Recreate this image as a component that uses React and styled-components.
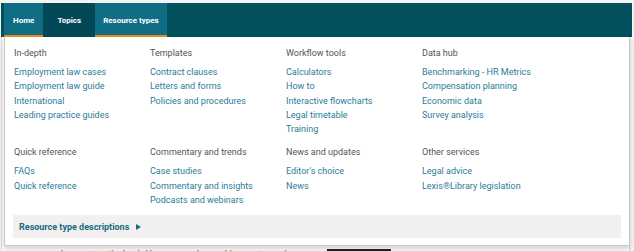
import styled, { createGlobalStyle } from 'styled-components'

const GlobalStyle = createGlobalStyle`
    html, body {
        margin: 0;
        padding: 0;
    }
    body {
        font-family: Roboto, "Liberation Sans", sans-serif;
        background: #f4f4f4;
    }
    * {
        box-sizing: border-box;
    }
`

const Page = styled.div`
    position: relative;
    width: 634px;
    height: 251px;
    padding-top: 3px;
    overflow: hidden;
    background: #f4f4f4;
`

const NavBar = styled.nav`
    display: flex;
    height: 34px;
    margin: 0 2px 0 1px;
    padding-left: 3px;
    background: #03505d;
`

const Tab = styled.a`
    display: flex;
    align-items: center;
    padding: 0 ${props => props.$pad || 9}px;
    font-size: 8px;
    font-weight: 700;
    color: #ffffff;
    background: ${props => props.$active ? '#0f6d84' : '#034856'};
    box-shadow: ${props => props.$active ? 'inset 0 -2px 0 #f08b1f' : 'none'};
`

const PageBody = styled.div`
    display: flex;
    align-items: flex-end;
    gap: 24px;
    height: 214px;
    margin: 0 4px 0 1px;
    padding-left: 41px;
    background: #ffffff;
    border-left: 1px solid #d8d8d8;
    border-right: 1px solid #d8d8d8;
`

const BodyText = styled.p`
    margin: 0 0 -9px;
    font-size: 9px;
    line-height: 12px;
    color: #333;
    white-space: nowrap;
`

const Figure = styled.div`
    width: 64px;
    height: 20px;
    margin-bottom: -18px;
    background: #222;
`

const Dropdown = styled.div`
    position: absolute;
    top: 37px;
    left: 4px;
    width: 626px;
    height: 209px;
    padding: 9px 8px 7px;
    display: flex;
    flex-direction: column;
    background: #ffffff;
    border: 1px solid #c8c8c8;
    border-top: none;
    box-shadow: 0 3px 5px rgba(0, 0, 0, 0.18);
`

const Grid = styled.div`
    display: grid;
    grid-template-columns: repeat(4, 136px);
    row-gap: 9px;
    padding-left: 1px;
`

const Group = styled.div`
    display: flex;
    flex-direction: column;
`

const Heading = styled.h3`
    margin: 0 0 5px;
    font-size: 9px;
    font-weight: 400;
    line-height: 14px;
    color: #555555;
`

const Link = styled.a`
    font-size: 9px;
    line-height: 14.3px;
    color: #2b7c97;
    white-space: nowrap;
`

const Footer = styled.div`
    display: flex;
    align-items: center;
    gap: 7px;
    height: 23px;
    margin-top: auto;
    padding-left: 6px;
    background: #f1f0ef;
`

const FooterLink = styled.a`
    font-size: 9px;
    font-weight: 700;
    color: #186b82;
`

const Arrow = styled.span`
    width: 0;
    height: 0;
    margin-top: 1px;
    border-left: 5px solid #186b82;
    border-top: 3px solid transparent;
    border-bottom: 3px solid transparent;
`

const groups = [
    { title: 'In-depth', links: ['Employment law cases', 'Employment law guide', 'International', 'Leading practice guides'] },
    { title: 'Templates', links: ['Contract clauses', 'Letters and forms', 'Policies and procedures'] },
    { title: 'Workflow tools', links: ['Calculators', 'How to', 'Interactive flowcharts', 'Legal timetable', 'Training'] },
    { title: 'Data hub', links: ['Benchmarking - HR Metrics', 'Compensation planning', 'Economic data', 'Survey analysis'] },
    { title: 'Quick reference', links: ['FAQs', 'Quick reference'] },
    { title: 'Commentary and trends', links: ['Case studies', 'Commentary and insights', 'Podcasts and webinars'] },
    { title: 'News and updates', links: ["Editor's choice", 'News'] },
    { title: 'Other services', links: ['Legal advice', 'Lexis®Library legislation'] },
]

export default function App() {
    return (
        <>
            <GlobalStyle />
            <Page>
                <NavBar>
                    <Tab $active>Home</Tab>
                    <Tab $pad={14}>Topics</Tab>
                    <Tab $active $pad={8}>Resource types</Tab>
                </NavBar>
                <PageBody>
                    <BodyText>employment particulars). However, oral or ambiguous terms have</BodyText>
                    <Figure />
                </PageBody>
                <Dropdown>
                    <Grid>
                        {groups.map(group => (
                            <Group key={group.title}>
                                <Heading>{group.title}</Heading>
                                {group.links.map(link => (
                                    <Link key={link}>{link}</Link>
                                ))}
                            </Group>
                        ))}
                    </Grid>
                    <Footer>
                        <FooterLink>Resource type descriptions</FooterLink>
                        <Arrow />
                    </Footer>
                </Dropdown>
            </Page>
        </>
    )
}
